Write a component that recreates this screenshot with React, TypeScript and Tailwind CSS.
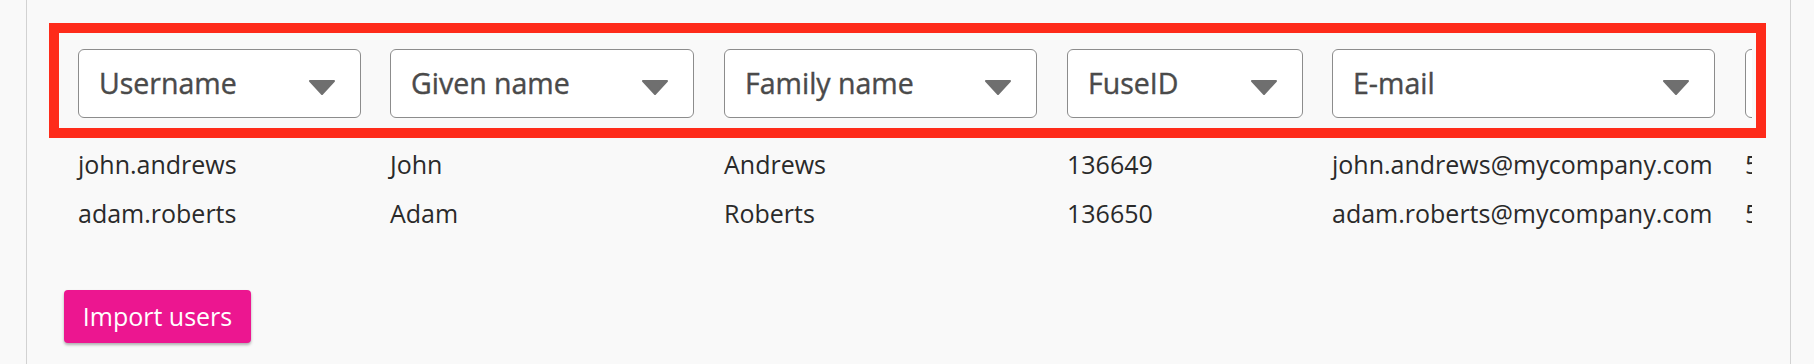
import React from "react";

const columns = [
  { label: "Username", cell: "w-[312px]", select: "w-[283px]" },
  { label: "Given name", cell: "w-[334px]", select: "w-[304px]" },
  { label: "Family name", cell: "w-[343px]", select: "w-[313px]" },
  { label: "FuseID", cell: "w-[265px]", select: "w-[236px]" },
  { label: "E-mail", cell: "w-[413px]", select: "w-[383px]" },
  { label: "Phone", cell: "w-[260px]", select: "w-[230px]" },
];

const users = [
  ["john.andrews", "John", "Andrews", "136649", "john.andrews@mycompany.com", "5550101"],
  ["adam.roberts", "Adam", "Roberts", "136650", "adam.roberts@mycompany.com", "5550102"],
];

function Caret() {
  return (
    <svg width="28" height="15" viewBox="0 0 28 15" className="mt-[8px] shrink-0">
      <path d="M2 1 H26 L14 14 Z" fill="#6f6f6f" stroke="#6f6f6f" strokeWidth="2" strokeLinejoin="round" />
    </svg>
  );
}

export default function App() {
  return (
    <div className="h-[364px] bg-[#f9f9f9] font-['Open_Sans',sans-serif]">
      <div className="ml-[26px] h-full w-[1765px] border-x border-[#d2d2d2]">
        <div className="relative pl-[37px] pt-[35px]">
          <div className="w-[1688px] overflow-hidden">
            {/* column pickers */}
            <div className="flex w-max border-b border-[#a8a8a8] pb-[19px] pt-[14px]">
              {columns.map((c) => (
                <div key={c.label} className={`${c.cell} shrink-0 pl-[14px]`}>
                  <div
                    className={`${c.select} flex h-[69px] items-center justify-between rounded-[6px] border border-[#8c8c8c] bg-white pl-[20px] pr-[24px]`}
                  >
                    <span className="text-[28.5px] text-[#4a4a4a] [-webkit-text-stroke:0.4px_#4a4a4a]">
                      {c.label}
                    </span>
                    <Caret />
                  </div>
                </div>
              ))}
            </div>

            {users.map((row) => (
              <div key={row[0]} className="flex h-[49px] w-max pt-[8px]">
                {row.map((v, i) => (
                  <div
                    key={i}
                    className={`${columns[i].cell} shrink-0 pl-[14px] text-[25px] leading-[37px] text-[#2a2a2a]`}
                  >
                    {v}
                  </div>
                ))}
              </div>
            ))}
          </div>

          {/* highlight frame */}
          <div className="pointer-events-none absolute left-[22px] top-[23px] h-[115px] w-[1717px] border-[10px] border-[#fe2b1a]" />

          <button className="mt-[54px] h-[53px] w-[187px] rounded-[4px] bg-[#ec1690] text-[25px] text-white shadow-[0_2px_3px_rgba(0,0,0,0.3)]">
            Import users
          </button>
        </div>
      </div>
    </div>
  );
}
